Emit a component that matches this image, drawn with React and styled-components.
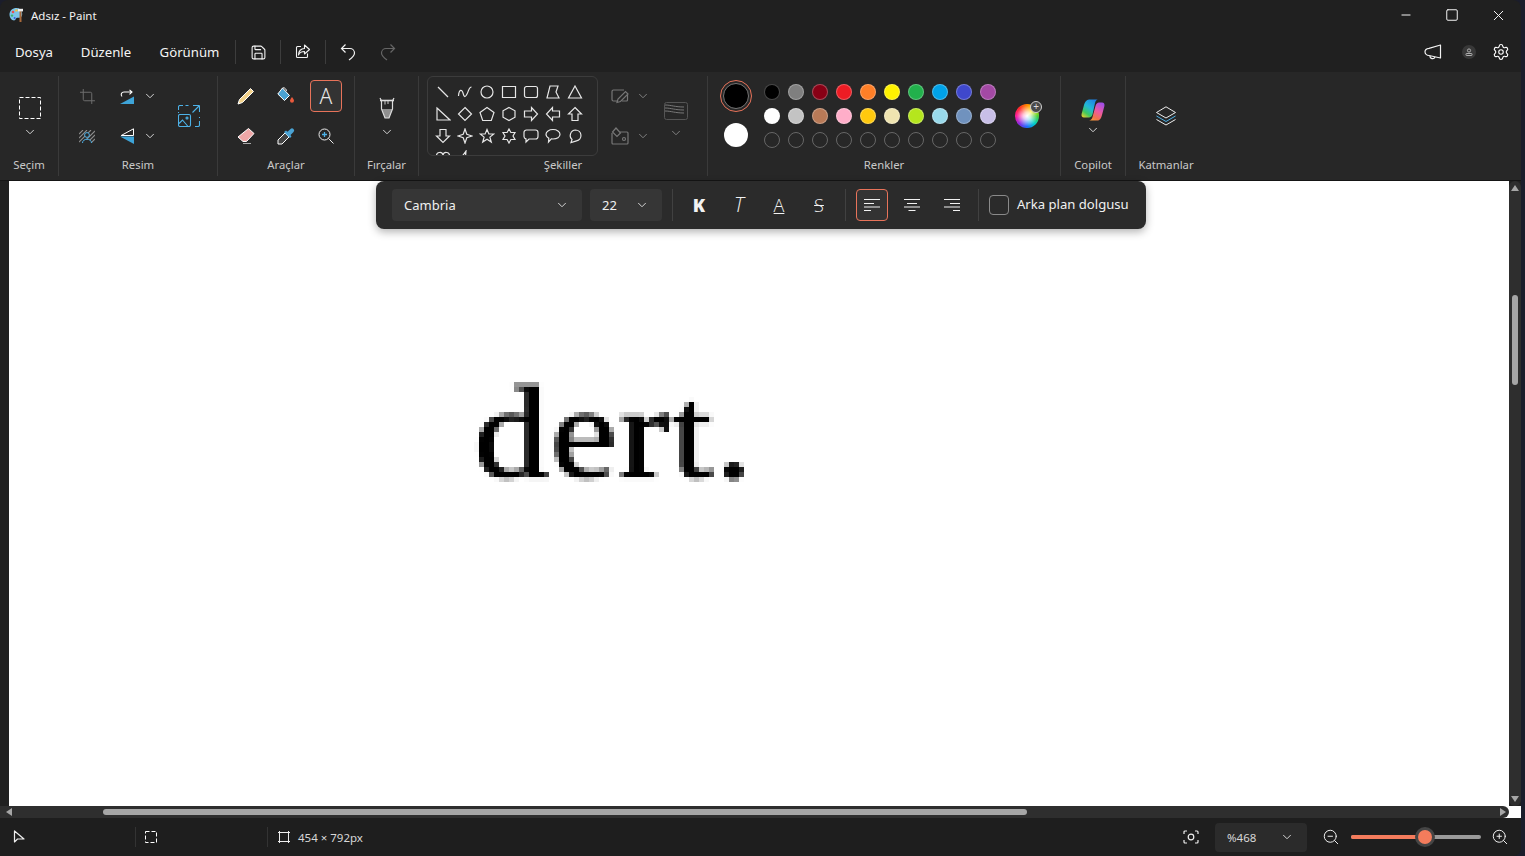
import React from 'react'
import styled, { createGlobalStyle } from 'styled-components'
import { ChevronDown, Crop, Minus, Save, Settings, Square, X, ZoomIn, ZoomOut } from 'lucide-react'

const GlobalStyle = createGlobalStyle`
  html, body { margin: 0; padding: 0; background: #1b1d2b; }
  body { width: 1525px; height: 856px; overflow: hidden; font-family: "Noto Sans", "Open Sans", sans-serif; color: #fff; }
  * { box-sizing: border-box; }
`

const Window = styled.div`
  width: 1521px;
  height: 856px;
  border-radius: 8px 8px 8px 0;
  overflow: hidden;
  background: #202020;
  display: flex;
  flex-direction: column;
`
const TitleBar = styled.header`
  height: 32px;
  display: flex;
  align-items: center;
  padding: 0 0 2px 9px;
  font-size: 11.5px;
  color: #f2f2f2;
`
const TitleText = styled.span`
  margin-left: 6px;
`
const WinButtons = styled.div`
  margin-left: auto;
  display: flex;
`
const WinButton = styled.div`
  width: 46px;
  height: 30px;
  display: flex;
  align-items: center;
  justify-content: center;
`
const MenuBar = styled.nav`
  height: 40px;
  display: flex;
  align-items: center;
  font-size: 13.2px;
`
const MenuItem = styled.div`
  width: ${p => p.$w}px;
  text-align: center;
  color: #f5f5f5;
  flex: none;
`
const MenuDivider = styled.div`
  width: 1px;
  height: 24px;
  background: #3d3d3d;
  flex: none;
`
const MenuIcon = styled.div`
  width: ${p => p.$w}px;
  display: flex;
  justify-content: center;
  color: ${p => (p.$off ? '#666' : '#f2f2f2')};
  flex: none;
`
const MenuRight = styled.div`
  margin-left: auto;
  padding-right: 11px;
  display: flex;
  align-items: center;
  gap: 8px;
`
const Avatar = styled.div`
  width: 14px;
  height: 14px;
  margin: 0 8px 0 12px;
  border-radius: 50%;
  background: #383838;
  display: flex;
  align-items: center;
  justify-content: center;
`
const Ribbon = styled.div`
  height: 109px;
  background: #272727;
  border-bottom: 1px solid #151515;
  padding-top: 4px;
  display: flex;
  align-items: flex-start;
`
const Group = styled.section`
  width: ${p => p.$w}px;
  height: 100px;
  flex: none;
  display: flex;
  flex-direction: column;
  border-right: ${p => (p.$last ? 'none' : '1px solid #3a3a3a')};
`
const GroupBody = styled.div`
  height: 80px;
  display: flex;
  padding-top: ${p => p.$top || 0}px;
  padding-left: ${p => p.$pl || 0}px;
  align-items: ${p => p.$align || 'stretch'};
  justify-content: ${p => p.$justify || 'flex-start'};
  flex-direction: ${p => p.$dir || 'row'};
  gap: ${p => p.$gap || 0}px;
`
const GroupLabel = styled.div`
  height: 18px;
  line-height: 18px;
  text-align: center;
  font-size: 11.3px;
  color: #c9c9c9;
`
const ToolGrid = styled.div`
  display: grid;
  grid-template-columns: ${p => p.$cols};
  grid-template-rows: 32px 32px;
  row-gap: 8px;
  column-gap: ${p => p.$gap || 0}px;
  padding: 4px 0 0 ${p => p.$left || 12}px;
`
const Tool = styled.div`
  width: ${p => p.$w || 32}px;
  height: 32px;
  display: flex;
  align-items: center;
  justify-content: center;
  border-radius: 4px;
  font-size: 21px;
  font-weight: 300;
  color: #e8e8e8;
  background: ${p => (p.$active ? '#333' : 'transparent')};
  border: ${p => (p.$active ? '1px solid #e8735a' : 'none')};
`
const BigCell = styled.div`
  grid-column: ${p => p.$col};
  grid-row: 1 / span 2;
  display: flex;
  flex-direction: column;
  gap: 6px;
  align-items: center;
  justify-content: center;
  padding-left: ${p => p.$shift || 0}px;
  padding-top: ${p => p.$down || 0}px;
`
const Chevron = styled(ChevronDown).attrs({ size: 14, strokeWidth: 1, absoluteStrokeWidth: true })`
  color: ${p => (p.$off ? '#808080' : '#d4d4d4')};
  flex: none;
`
const ShapeBox = styled.div`
  width: 171px;
  height: 80px;
  margin-left: 8px;
  padding: 4px 0 0 4px;
  border: 1px solid #3c3c3c;
  border-radius: 6px;
  overflow: hidden;
  display: grid;
  grid-template-columns: repeat(7, 22px);
  grid-auto-rows: 22px;
`
const ShapeCell = styled.div`
  display: flex;
  align-items: center;
  justify-content: center;
`
const ActiveColors = styled.div`
  width: 32px;
  margin: 4px 8px 0 12px;
  display: flex;
  flex-direction: column;
  align-items: center;
  gap: 11px;
`
const ColorRing = styled.div`
  width: 32px;
  height: 32px;
  border-radius: 50%;
  border: 1px solid #e8735a;
  display: flex;
  align-items: center;
  justify-content: center;
`
const ColorFill = styled.div`
  width: ${p => p.$size}px;
  height: ${p => p.$size}px;
  border-radius: 50%;
  background: ${p => p.$color};
  border: ${p => (p.$edge ? '1px solid #777' : 'none')};
`
const Palette = styled.div`
  display: grid;
  grid-template-columns: repeat(10, 24px);
  grid-auto-rows: 24px;
  padding-top: 4px;
`
const SwatchCell = styled.div`
  display: flex;
  align-items: center;
  justify-content: center;
`
const Swatch = styled.div`
  width: 16px;
  height: 16px;
  border-radius: 50%;
  background: ${p => p.$color || 'transparent'};
  border: 1px solid ${p => (p.$color ? 'rgba(255,255,255,.28)' : '#666')};
`
const WheelWrap = styled.div`
  position: relative;
  width: 24px;
  height: 24px;
  margin: 28px 0 0 15px;
`
const Wheel = styled.div`
  width: 24px;
  height: 24px;
  border-radius: 50%;
  background: radial-gradient(circle, #fff 0%, rgba(255,255,255,.75) 22%, rgba(255,255,255,0) 62%),
    conic-gradient(#ff8a00, #ffe600, #4cd137, #00d0c8, #1e6cff, #8a2be2, #ff1e9c, #ff2a2a, #ff8a00);
`
const WheelPlus = styled.div`
  position: absolute;
  right: -3px;
  top: -3px;
  width: 12px;
  height: 12px;
  border-radius: 50%;
  background: #4a4a4a;
  border: 1px solid #d0d0d0;
  color: #ddd;
  font-size: 10px;
  line-height: 9px;
  text-align: center;
`
const Workspace = styled.main`
  position: relative;
  flex: 1;
  display: flex;
  flex-direction: column;
`
const CanvasRow = styled.div`
  height: 625px;
  display: flex;
`
const Gutter = styled.div`
  width: 9px;
  background: #202020;
`
const Canvas = styled.div`
  width: 1500px;
  background: #fff;
  padding: 186px 0 0 465px;
  overflow: hidden;
`
const CanvasText = styled.div`
  width: 320px;
  filter: url(#pixelate);
`
const CanvasWord = styled.span`
  display: inline-block;
  transform: scaleX(1.13);
  transform-origin: left center;
  font-family: "Liberation Serif", serif;
  font-size: 132px;
  line-height: 132px;
  letter-spacing: 2px;
  color: #000;
  -webkit-text-stroke: 1.6px #000;
`
const VScroll = styled.div`
  width: 12px;
  background: #2e2e2e;
  border-radius: 6px;
  display: flex;
  flex-direction: column;
  align-items: center;
  padding: 4px 0;
`
const VThumb = styled.div`
  width: 6px;
  height: 90px;
  margin-top: ${p => p.$start}px;
  border-radius: 3px;
  background: #a6a6a6;
`
const Arrow = styled.div`
  width: 0;
  height: 0;
  ${p => p.$dir === 'up' && 'border: 4px solid transparent; border-top: 0; border-bottom: 6px solid #a6a6a6;'}
  ${p => p.$dir === 'down' && 'border: 4px solid transparent; border-bottom: 0; border-top: 6px solid #a6a6a6; margin-top: auto;'}
  ${p => p.$dir === 'left' && 'border: 4px solid transparent; border-left: 0; border-right: 6px solid #a6a6a6;'}
  ${p => p.$dir === 'right' && 'border: 4px solid transparent; border-right: 0; border-left: 6px solid #a6a6a6; margin-left: auto;'}
`
const HRow = styled.div`
  height: 12px;
  background: #fff;
`
const HScroll = styled.div`
  width: 1509px;
  height: 12px;
  background: #2e2e2e;
  border-radius: 0 6px 6px 0;
  display: flex;
  align-items: center;
  padding: 0 3px 0 6px;
`
const HThumb = styled.div`
  width: 924px;
  height: 6px;
  margin-left: ${p => p.$start}px;
  border-radius: 3px;
  background: #a6a6a6;
`
const TextBar = styled.div`
  position: absolute;
  left: 376px;
  top: 0;
  width: 770px;
  height: 48px;
  padding: 0 0 0 16px;
  background: #2b2b2b;
  border-radius: 8px;
  box-shadow: 0 3px 8px rgba(0, 0, 0, .3);
  display: flex;
  align-items: center;
  font-size: 13.1px;
  color: #f0f0f0;
`
const Select = styled.div`
  width: ${p => p.$w}px;
  height: ${p => p.$h || 32}px;
  margin-right: ${p => p.$mr || 0}px;
  padding: 0 13px 0 12px;
  background: #363636;
  border-radius: 4px;
  display: flex;
  align-items: center;
  justify-content: space-between;
  font-size: ${p => p.$fs || 13}px;
`
const BarDivider = styled.div`
  width: 1px;
  height: 32px;
  background: #414141;
  margin: ${p => p.$m};
  flex: none;
`
const BarButton = styled.div`
  width: 32px;
  height: 32px;
  margin-right: ${p => p.$mr || 0}px;
  flex: none;
  display: flex;
  align-items: center;
  justify-content: center;
  border-radius: 4px;
  background: ${p => (p.$active ? '#333' : 'transparent')};
  border: ${p => (p.$active ? '1px solid #e8735a' : 'none')};
`
const Glyph = styled.span`
  font-size: ${p => p.$size || 18}px;
  line-height: 18px;
  color: #f2f2f2;
  font-family: "Open Sans", sans-serif;
  font-weight: ${p => (p.$bold ? 800 : 300)};
  font-style: ${p => (p.$italic ? 'italic' : 'normal')};
  text-decoration: ${p => p.$deco || 'none'};
  text-decoration-thickness: 1px;
`
const Check = styled.div`
  width: 20px;
  height: 20px;
  margin-right: 8px;
  border: 1px solid #8a8a8a;
  border-radius: 4px;
  flex: none;
`
const CheckLabel = styled.span`
  padding-bottom: 2px;
`
const StatusBar = styled.footer`
  height: 38px;
  background: #1e1e1e;
  display: flex;
  align-items: center;
  font-size: 11.5px;
  color: #d8d8d8;
`
const StatusCell = styled.div`
  width: ${p => p.$w}px;
  height: 20px;
  padding-left: ${p => p.$left}px;
  border-right: ${p => (p.$noline ? 'none' : '1px solid #333')};
  display: flex;
  align-items: center;
  gap: 8px;
  flex: none;
`
const StatusRight = styled.div`
  margin-left: auto;
  padding-right: 12px;
  display: flex;
  align-items: center;
`
const ZoomSelect = styled(Select)`
  margin: 0 15px 0 16px;
  background: #2b2b2b;
`
const Slider = styled.div`
  position: relative;
  width: 130px;
  height: 4px;
  margin: 0 10px 0 11px;
  border-radius: 2px;
  background: #9a9a9a;
`
const SliderFill = styled.div`
  height: 4px;
  border-radius: 2px;
  background: #f47c5c;
`
const SliderThumb = styled.div`
  position: absolute;
  top: -5px;
  margin-left: -7px;
  width: 14px;
  height: 14px;
  border-radius: 50%;
  background: #f47c5c;
  box-shadow: 0 0 0 3px #454545;
`

const PaintLogo = () => (
  <svg width="16" height="16" viewBox="0 0 16 16">
    <path d="M7.5 1C3.5 1 .5 3.7.5 7.5c0 3.2 2.2 6 4.6 6 1.6 0 1.4-1.8 2.4-2.4 1.2-.7 3.5.3 4.6-1 .9-1.1 1.4-2.6.9-4.4C12.2 2.8 10.3 1 7.5 1z" fill="#7cc4ea" />
    <circle cx="4" cy="5" r="1.3" fill="#e94f4f" />
    <circle cx="7.4" cy="3.4" r="1.2" fill="#f5c33b" />
    <circle cx="3" cy="8.6" r="1.2" fill="#3bb273" />
    <circle cx="5.6" cy="11" r="1" fill="#3b5bdb" />
    <rect x="10.5" y="4" width="2" height="11" fill="#a8693a" />
    <rect x="9" y="1.8" width="5" height="2.6" fill="#eee" />
  </svg>
)
const Marquee = ({ size = 22, color = '#fff' }) => (
  <svg width={size} height={size} viewBox={`0 0 ${size} ${size}`}>
    <rect x=".5" y=".5" width={size - 1} height={size - 1} fill="none" stroke={color} strokeDasharray="4 2" />
  </svg>
)
const ShareIcon = () => (
  <svg width="16" height="16" viewBox="0 0 16 16" fill="none" stroke="#f2f2f2" strokeWidth="1.1" strokeLinejoin="round">
    <path d="M6 2.500H2.500a1 1 0 0 0-1 1v9a1 1 0 0 0 1 1h9a1 1 0 0 0 1-1v-3" />
    <path d="M9.500 1l5 4.500-5 4.500V7.500c-3 0-5 1-6 3.500 0-4 2.500-6.500 6-6.500z" />
  </svg>
)
const UndoIcon = ({ flip }) => (
  <svg width="16" height="18" viewBox="0 0 16 18" fill="none" stroke="currentColor" strokeWidth="1.2" style={flip ? { transform: 'scaleX(-1)' } : undefined}>
    <path d="M5.500 1.500 1.500 5.500l4 4M1.500 5.500h8.500a4.500 4.500 0 0 1 4.500 4.500c0 2.500-2 4.500-5.500 7" />
  </svg>
)
const MegaphoneIcon = () => (
  <svg width="18" height="16" viewBox="0 0 18 16" fill="none" stroke="#f2f2f2" strokeWidth="1.2" strokeLinejoin="round">
    <path d="M16.500 1v13L5 11.500C2.800 11.500 1 9.800 1 7.800S2.800 4.500 5 4.300z" />
    <path d="M6 11.800a2.600 2.600 0 0 0 5 1.200" />
  </svg>
)
const RotateIcon = () => (
  <svg width="14" height="15" viewBox="0 0 14 15">
    <path d="M14 7.500V15H0z" fill="#3ea4d8" />
    <path d="M2 7.500C.3 5.500 1.500 3 4 3h8M9.500 .8 12 3 9.500 5.300" fill="none" stroke="#fff" strokeWidth="1.1" />
  </svg>
)
const FlipIcon = () => (
  <svg width="14" height="16" viewBox="0 0 14 16">
    <path d="M13.500 .8v6.700H1.200z" fill="none" stroke="#fff" />
    <path d="M14 8.500V16L0 8.500z" fill="#3ea4d8" />
  </svg>
)
const RemoveBgIcon = () => (
  <svg width="16" height="13" viewBox="0 0 16 13">
    <path d="M0 4 4 0M0 8 8 0M0 12 12 0M4 13 16 1M8 13l8-8M12 13l4-4" stroke="#8a8a8a" strokeWidth="1.1" />
    <circle cx="8" cy="5" r="2.400" fill="#272727" stroke="#4db2e8" />
    <path d="M3.500 13c0-5 9-5 9 0" fill="#272727" stroke="#4db2e8" />
  </svg>
)
const ResizeIcon = () => (
  <svg width="22" height="22" viewBox="0 0 22 22" fill="none" stroke="#4db2e8" strokeWidth="1.1">
    <path d="M.5 5V2A1.500 1.500 0 0 1 2 .5h3M7.500 .5h3M.5 7v1M21.500 12v1M21.500 16v4a1.500 1.500 0 0 1-1.500 1.500h-3" />
    <rect x=".5" y="9.500" width="12" height="12" rx="1.500" />
    <circle cx="9" cy="13" r="1" />
    <path d="m1 18.500 3.500-3.500 5.500 6.500M15 .5h6.500M21.500 .5V7M21.500 .5 14.500 7.500" />
  </svg>
)
const PencilIcon = () => (
  <svg width="18" height="18" viewBox="0 0 18 18">
    <path d="M13.500 1.500 16.500 4.500 5.500 15.500 1 17 2.500 12.500z" fill="#f3d28b" stroke="#fff" strokeLinejoin="round" />
  </svg>
)
const BucketIcon = () => (
  <svg width="18" height="18" viewBox="0 0 18 18">
    <path d="M5.500 1 12.500 8.500 7.500 13.500 .8 7z" fill="#4aa3d4" stroke="#fff" strokeLinejoin="round" />
    <path d="M5.500 1c1.500-1 4 1 4 3" fill="none" stroke="#fff" />
    <path d="M15 10c-1 1.600-2 2.500-2 3.800a2 2 0 0 0 4 0c0-1.300-1-2.200-2-3.800z" fill="#ea5a3c" />
  </svg>
)
const EraserIcon = () => (
  <svg width="18" height="18" viewBox="0 0 18 18">
    <path d="M11.500 1.500 17 6.500 9.500 14.500H6L1 10z" fill="#efa7a7" stroke="#fff" strokeLinejoin="round" />
    <path d="M6 16.500h8" stroke="#aaa" />
  </svg>
)
const DropperIcon = () => (
  <svg width="18" height="18" viewBox="0 0 18 18">
    <path d="M8 6 12 10 5 17H1v-4z" fill="#444" stroke="#fff" strokeLinejoin="round" />
    <path d="M7 5 13 11 14.500 9.500 13.500 8 16.500 5a2 2 0 0 0-3-3L10.500 4.800 9 3.500z" fill="#4aa3d4" />
  </svg>
)
const ColorZoom = ({ plus }) => (
  <svg width="16" height="16" viewBox="0 0 16 16" fill="none">
    <circle cx="6.500" cy="6.500" r="5.500" stroke="#eee" />
    <path d="m10.500 10.500 5 5" stroke="#eee" />
    <path d={plus ? 'M4 6.500h5M6.500 4v5' : 'M4 6.500h5'} stroke="#4db2e8" strokeWidth="1.300" />
  </svg>
)
const BrushIcon = () => (
  <svg width="16" height="22" viewBox="0 0 16 22">
    <path d="M2.500 12h11L10 21H6z" fill="#8f8f8f" />
    <path d="M1 1l1.500 3v8L6 21h4l3.500-9V4L15 1" fill="none" stroke="#ddd" strokeWidth="1.200" />
    <path d="M1 3.500h14" stroke="#ddd" strokeWidth="1.600" />
    <path d="M6 4v3.500M9 4v3" stroke="#ccc" />
  </svg>
)
const OutlineIcon = () => (
  <svg width="18" height="16" viewBox="0 0 18 16" fill="none" stroke="#777" strokeWidth="1.200">
    <path d="M7 13H2.500a1.500 1.500 0 0 1-1.500-1.500v-8A1.500 1.500 0 0 1 2.500 2H13M16.500 7v5a1 1 0 0 1-1 1H11" />
    <path d="M6 14.500 7 11 14.500 3.500 17 6 9.500 13.500z" />
  </svg>
)
const FillIcon = () => (
  <svg width="18" height="18" viewBox="0 0 18 18" fill="none" stroke="#777" strokeWidth="1.200">
    <path d="M9 5h7a1 1 0 0 1 1 1v10a1 1 0 0 1-1 1H2a1 1 0 0 1-1-1V6" />
    <path d="M5 1 1.500 5 6 9.500 9.500 6z" />
    <circle cx="13" cy="12" r="1.500" />
  </svg>
)
const SizeIcon = () => (
  <svg width="24" height="18" viewBox="0 0 24 18" fill="none">
    <rect x=".5" y=".5" width="23" height="17" rx="2" stroke="#555" />
    <path d="M1 3c6 0 10 2 19 2M1 6c6 0 10 2 19 2M1 9c6 0 10 2 19 2" stroke="#777" />
  </svg>
)
const CopilotIcon = () => (
  <svg width="24" height="22" viewBox="0 0 24 22">
    <defs>
      <linearGradient id="cpA" x1=".8" y1="0" x2=".1" y2="1">
        <stop offset="0" stopColor="#1d7fe6" />
        <stop offset=".45" stopColor="#22b8d8" />
        <stop offset=".75" stopColor="#3fc85f" />
        <stop offset="1" stopColor="#e8d030" />
      </linearGradient>
      <linearGradient id="cpB" x1=".7" y1="0" x2=".2" y2="1">
        <stop offset="0" stopColor="#a24fe6" />
        <stop offset=".45" stopColor="#ee5aa0" />
        <stop offset=".8" stopColor="#f0744a" />
        <stop offset="1" stopColor="#f59a3c" />
      </linearGradient>
    </defs>
    <path d="M8 .5h9c-1.500 0-2.500 1.500-3 3.500L11.500 15.500c-.5 2-2 3-3.500 3H3c-2 0-2.800-1.500-2.400-3.500L3 6C3.800 3 5.500 .5 8 .5z" fill="url(#cpA)" />
    <path d="M16.500 21.500H8c1.500 0 3-1.500 3.500-3.500L14.500 7c.5-2 2-3.500 3.500-3.500H21c2 0 2.800 1.500 2.400 3.500L21 16c-.8 3-2 5.500-4.500 5.500z" fill="url(#cpB)" />
  </svg>
)
const LayersIcon = () => (
  <svg width="20" height="20" viewBox="0 0 20 20" fill="none" strokeLinejoin="round">
    <path d="M10 .8 19.500 6.500 10 12 .5 6.500z" stroke="#eee" />
    <path d="M.5 10l9.500 5.500 9.500-5.500" stroke="#4db2e8" />
    <path d="M.5 13.500 10 19l9.500-5.500" stroke="#eee" />
  </svg>
)
const PointerIcon = () => (
  <svg width="12" height="14" viewBox="0 0 12 14" fill="none" stroke="#eee" strokeWidth="1.200">
    <path d="M1.500 1v11l3-3H11z" strokeLinejoin="round" />
  </svg>
)
const CanvasSizeIcon = () => (
  <svg width="12" height="12" viewBox="0 0 12 12" fill="none" stroke="#eee">
    <path d="M1.500 0v12M10.500 0v12M0 1.500h12M0 10.500h12" />
  </svg>
)
const CaptureIcon = () => (
  <svg width="16" height="14" viewBox="0 0 16 14" fill="none" stroke="#eee" strokeWidth="1.200">
    <path d="M1 4V2a1 1 0 0 1 1-1h2M12 1h2a1 1 0 0 1 1 1v2M15 10v2a1 1 0 0 1-1 1h-2M4 13H2a1 1 0 0 1-1-1v-2" />
    <circle cx="8" cy="7" r="2.800" />
  </svg>
)
const AlignIcon = ({ side }) => {
  const x = { left: [0, 0], center: [3, 4.5], right: [6, 9] }[side]
  return (
    <svg width="16" height="12" viewBox="0 0 16 12" stroke="#f2f2f2">
      <path d={`M0 .5h16M${x[0]} 4.500h10M0 8h16M${x[1]} 11.500h7`} />
    </svg>
  )
}
const AvatarGlyph = () => (
  <svg width="8" height="8" viewBox="0 0 8 8" fill="none" stroke="#ccc" strokeWidth=".8">
    <circle cx="4" cy="2.500" r="1.600" />
    <rect x="1" y="5.500" width="6" height="2" rx=".6" />
  </svg>
)

const SHAPES = [
  'M3 3l10 10',
  'M1.500 12C2 5 5 5 6 9s2 5 4 1 2-7 4.500-7',
  'M8 2a6 6 0 1 0 0 12A6 6 0 0 0 8 2z',
  'M1.500 2.500h13v11h-13z',
  'M3.500 2.500h9a2 2 0 0 1 2 2v7a2 2 0 0 1-2 2h-9a2 2 0 0 1-2-2v-7a2 2 0 0 1 2-2z',
  'M5 2h8L11 8l3 6H2z',
  'M8 2l6.500 12h-13z',
  'M2 2l13 12H2z',
  'M8 1.500L14.500 8 8 14.500 1.500 8z',
  'M8 1.500L15 6.500 12.300 14.500H3.700L1 6.500z',
  'M8 1.500L14 4.800V11.200L8 14.500 2 11.200V4.800z',
  'M1.500 5H8.500V1.500L14.500 8 8.500 14.500V11H1.500z',
  'M14.500 5H7.500V1.500L1.500 8 7.500 14.500V11H14.500z',
  'M8 1.500L14.500 8H11V14.500H5V8H1.500z',
  'M5 1.500H11V8H14.500L8 14.500 1.500 8H5z',
  'M8 1L9.800 6.200 15 8 9.800 9.800 8 15 6.200 9.800 1 8 6.200 6.200z',
  'M8 1.500L9.900 6H14.800L10.900 9.100 12.300 14 8 11.200 3.700 14 5.100 9.100 1.200 6H6.100z',
  'M8 1L9.900 4.500H14L12 8 14 11.500H9.900L8 15 6.100 11.500H2L4 8 2 4.500H6.100z',
  'M3.500 2h9A2.500 2.500 0 0 1 15 4.500v4a2.500 2.500 0 0 1-2.500 2.500H6l-3 3v-3.100A2.500 2.500 0 0 1 1 8.500v-4A2.500 2.500 0 0 1 3.500 2z',
  'M8 1.500c4 0 7 2.100 7 4.800s-3 4.700-7 4.700c-.6 0-1.200 0-1.700-.1L3.500 14l.3-3.800C2 9.300 1 7.900 1 6.300 1 3.600 4 1.500 8 1.500z',
  'M8.500 2a5.500 5.500 0 0 1 1 10.900L4 14.500l1-3A5.500 5.500 0 0 1 8.500 2z',
  'M8 14C4 11 1.500 9 1.500 6a3.300 3.300 0 0 1 6.500-1 3.300 3.300 0 0 1 6.500 1C14.500 9 12 11 8 14z',
  'M9 1L4 8h3.500L6 15l6-8H8.500z',
]
const COLORS = [
  '#000000', '#7f7f7f', '#880015', '#ed1c24', '#ff7f27', '#fff200', '#22b14c', '#00a2e8', '#3f48cc', '#a349a4',
  '#ffffff', '#c3c3c3', '#b97a57', '#ffaec9', '#ffc90e', '#efe4b0', '#b5e61d', '#99d9ea', '#7092be', '#c8bfe7',
  null, null, null, null, null, null, null, null, null, null,
]

const App = () => {
  return (
    <>
      <GlobalStyle />
      <svg width="0" height="0" style={{ position: 'absolute' }}>
        <filter id="pixelate" x="0" y="0" width="100%" height="100%" colorInterpolationFilters="sRGB">
          <feGaussianBlur in="SourceGraphic" stdDeviation="1" result="soft" />
          <feFlood x="2" y="2" width="1" height="1" />
          <feComposite width="5" height="5" />
          <feTile result="dots" />
          <feComposite in="soft" in2="dots" operator="in" />
          <feMorphology operator="dilate" radius="2" />
        </filter>
      </svg>
      <Window>
        <TitleBar>
          <PaintLogo />
          <TitleText>Adsız - Paint</TitleText>
          <WinButtons>
            <WinButton><Minus size={14} strokeWidth={1} absoluteStrokeWidth /></WinButton>
            <WinButton><Square size={14} strokeWidth={1} absoluteStrokeWidth /></WinButton>
            <WinButton><X size={17} strokeWidth={1} absoluteStrokeWidth /></WinButton>
          </WinButtons>
        </TitleBar>
        <MenuBar>
          <MenuItem $w={68}>Dosya</MenuItem>
          <MenuItem $w={76}>Düzenle</MenuItem>
          <MenuItem $w={91}>Görünüm</MenuItem>
          <MenuDivider />
          <MenuIcon $w={44}><Save size={17} strokeWidth={1.1} absoluteStrokeWidth /></MenuIcon>
          <MenuDivider />
          <MenuIcon $w={44}><ShareIcon /></MenuIcon>
          <MenuDivider />
          <MenuIcon $w={44}><UndoIcon /></MenuIcon>
          <MenuIcon $off $w={36}><UndoIcon flip /></MenuIcon>
          <MenuRight>
            <MegaphoneIcon />
            <Avatar><AvatarGlyph /></Avatar>
            <Settings size={18} strokeWidth={1.1} absoluteStrokeWidth />
          </MenuRight>
        </MenuBar>

        <Ribbon>
          <Group $w={59}>
            <GroupBody $dir="column" $align="center" $justify="center" $gap={6} $top={4} $pl={2}>
              <Marquee />
              <Chevron />
            </GroupBody>
            <GroupLabel>Seçim</GroupLabel>
          </Group>
          <Group $w={159}>
            <GroupBody>
              <ToolGrid $cols="32px 8px 32px 14px 60px">
                <Tool><Crop size={17} strokeWidth={1} absoluteStrokeWidth color="#6e6e6e" /></Tool>
                <span />
                <Tool><RotateIcon /></Tool>
                <Tool $w={14}><Chevron /></Tool>
                <BigCell $col="5" $shift={4}><ResizeIcon /></BigCell>
                <Tool><RemoveBgIcon /></Tool>
                <span />
                <Tool><FlipIcon /></Tool>
                <Tool $w={14}><Chevron /></Tool>
              </ToolGrid>
            </GroupBody>
            <GroupLabel>Resim</GroupLabel>
          </Group>
          <Group $w={137}>
            <GroupBody>
              <ToolGrid $cols="32px 32px 32px" $gap={8}>
                <Tool><PencilIcon /></Tool>
                <Tool><BucketIcon /></Tool>
                <Tool $active>A</Tool>
                <Tool><EraserIcon /></Tool>
                <Tool><DropperIcon /></Tool>
                <Tool><ColorZoom plus /></Tool>
              </ToolGrid>
            </GroupBody>
            <GroupLabel>Araçlar</GroupLabel>
          </Group>
          <Group $w={64}>
            <GroupBody $dir="column" $align="center" $justify="center" $gap={6} $top={4}>
              <BrushIcon />
              <Chevron />
            </GroupBody>
            <GroupLabel>Fırçalar</GroupLabel>
          </Group>
          <Group $w={289}>
            <GroupBody>
              <ShapeBox>
                {SHAPES.map((d, i) => (
                  <ShapeCell key={i}>
                    <svg width="16" height="16" viewBox="0 0 16 16" fill="none" stroke="#e6e6e6" strokeWidth="1.200">
                      <path d={d} />
                    </svg>
                  </ShapeCell>
                ))}
              </ShapeBox>
              <ToolGrid $cols="32px 14px 10px 32px" $left={6}>
                <Tool><OutlineIcon /></Tool>
                <Tool $w={14}><Chevron $off /></Tool>
                <BigCell $col="4" $down={10}><SizeIcon /><Chevron $off /></BigCell>
                <span />
                <Tool><FillIcon /></Tool>
                <Tool $w={14}><Chevron $off /></Tool>
              </ToolGrid>
            </GroupBody>
            <GroupLabel>Şekiller</GroupLabel>
          </Group>
          <Group $w={353}>
            <GroupBody>
              <ActiveColors>
                <ColorRing><ColorFill $size={26} $color="#000" $edge /></ColorRing>
                <ColorFill $size={24} $color="#fff" />
              </ActiveColors>
              <Palette>
                {COLORS.map((c, i) => (
                  <SwatchCell key={i}><Swatch $color={c} /></SwatchCell>
                ))}
              </Palette>
              <WheelWrap>
                <Wheel />
                <WheelPlus>+</WheelPlus>
              </WheelWrap>
            </GroupBody>
            <GroupLabel>Renkler</GroupLabel>
          </Group>
          <Group $w={65}>
            <GroupBody $dir="column" $align="center" $justify="center" $gap={2} $top={4}>
              <CopilotIcon />
              <Chevron />
            </GroupBody>
            <GroupLabel>Copilot</GroupLabel>
          </Group>
          <Group $w={80} $last>
            <GroupBody $dir="column" $align="center" $justify="center">
              <LayersIcon />
            </GroupBody>
            <GroupLabel>Katmanlar</GroupLabel>
          </Group>
        </Ribbon>

        <Workspace>
          <CanvasRow>
            <Gutter />
            <Canvas>
              <CanvasText><CanvasWord>dert.</CanvasWord></CanvasText>
            </Canvas>
            <VScroll>
              <Arrow $dir="up" />
              <VThumb $start={104} />
              <Arrow $dir="down" />
            </VScroll>
          </CanvasRow>
          <HRow>
            <HScroll>
              <Arrow $dir="left" />
              <HThumb $start={91} />
              <Arrow $dir="right" />
            </HScroll>
          </HRow>
          <TextBar>
            <Select $w={190} $mr={8}>Cambria<Chevron /></Select>
            <Select $w={72}>22<Chevron /></Select>
            <BarDivider $m="0 10px 0 10px" />
            <BarButton $mr={8}><Glyph $bold>K</Glyph></BarButton>
            <BarButton $mr={8}><Glyph $italic $size={20}>T</Glyph></BarButton>
            <BarButton $mr={8}><Glyph $deco="underline">A</Glyph></BarButton>
            <BarButton><Glyph $deco="line-through">S</Glyph></BarButton>
            <BarDivider $m="0 10px 0 10px" />
            <BarButton $active $mr={8}><AlignIcon side="left" /></BarButton>
            <BarButton $mr={8}><AlignIcon side="center" /></BarButton>
            <BarButton><AlignIcon side="right" /></BarButton>
            <BarDivider $m="0 10px 0 10px" />
            <Check />
            <CheckLabel>Arka plan dolgusu</CheckLabel>
          </TextBar>
        </Workspace>

        <StatusBar>
          <StatusCell $w={136} $left={13}><PointerIcon /></StatusCell>
          <StatusCell $w={132} $left={9}><Marquee size={12} /></StatusCell>
          <StatusCell $w={200} $left={10} $noline><CanvasSizeIcon />454 × 792px</StatusCell>
          <StatusRight>
            <CaptureIcon />
            <ZoomSelect $w={92} $h={29} $fs={11.5}>%468<Chevron /></ZoomSelect>
            <ZoomOut size={18} strokeWidth={1} absoluteStrokeWidth color="#eee" />
            <Slider>
              <SliderFill style={{ width: '57%' }} />
              <SliderThumb style={{ left: '57%' }} />
            </Slider>
            <ZoomIn size={18} strokeWidth={1} absoluteStrokeWidth color="#eee" />
          </StatusRight>
        </StatusBar>
      </Window>
    </>
  )
}

export default App
